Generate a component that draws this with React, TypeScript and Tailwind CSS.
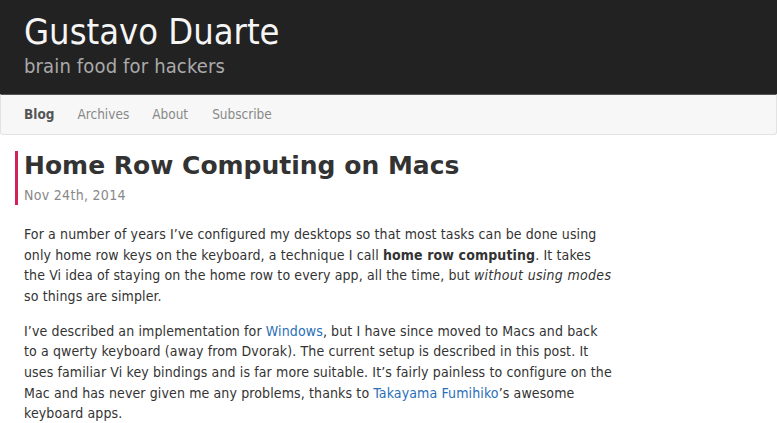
export default function App() {
  return (
    <div className="min-h-[423px] bg-white" style={{ fontFamily: '"DejaVu Sans Condensed", "DejaVu Sans", sans-serif' }}>
      <header className="bg-[#222222] h-[94px] px-6 pt-[12px]">
        <h1 className="text-[#f5f5f5] text-[36px] leading-[40px]">Gustavo Duarte</h1>
        <h2 className="text-[#aaaaaa] text-[20px] leading-[24px] mt-[2px] tracking-[0.15px]">brain food for hackers</h2>
      </header>
      <nav className="h-[41px] bg-[#f7f7f7] border border-[#e3e3e3] border-t-[#555555] rounded-b-[3px] flex items-center pl-[23px] text-[13.5px]">
        <a className="font-bold text-[#555555]">Blog</a>
        <a className="text-[#888888] ml-[23px]">Archives</a>
        <a className="text-[#888888] ml-[23px]">About</a>
        <a className="text-[#888888] ml-[24px]">Subscribe</a>
      </nav>
      <article className="pt-4">
        <div className="border-l-[3px] border-[#d3215a] ml-[15px] pl-[6px]">
          <h1 className="font-bold text-[#333333] text-[25px] leading-[28px] pt-[1px]" style={{ fontFamily: '"DejaVu Sans", sans-serif' }}>Home Row Computing on Macs</h1>
          <p className="text-[#888888] text-[14px] leading-[20px] mt-[5px] tracking-[0.3px]">Nov 24th, 2014</p>
        </div>
        <div className="pl-6 pt-[19px] text-[14px] leading-[20.6px] tracking-[0.12px] text-[#333333] whitespace-nowrap">
          <p>
            For a number of years I’ve configured my desktops so that most tasks can be done using
            <br />
            only home row keys on the keyboard, a technique I call <strong>home row computing</strong>. It takes
            <br />
            the Vi idea of staying on the home row to every app, all the time, but <em className="tracking-[0.3px]">without using modes</em>
            <br />
            so things are simpler.
          </p>
          <p className="mt-[14.5px]">
            I’ve described an implementation for <a className="text-[#2a6fb8]">Windows</a>, but I have since moved to Macs and back
            <br />
            to a qwerty keyboard (away from Dvorak). The current setup is described in this post. It
            <br />
            uses familiar Vi key bindings and is far more suitable. It’s fairly painless to configure on the
            <br />
            Mac and has never given me any problems, thanks to <a className="text-[#2a6fb8]">Takayama Fumihiko</a>’s awesome
            <br />
            keyboard apps.
          </p>
        </div>
      </article>
    </div>
  );
}
